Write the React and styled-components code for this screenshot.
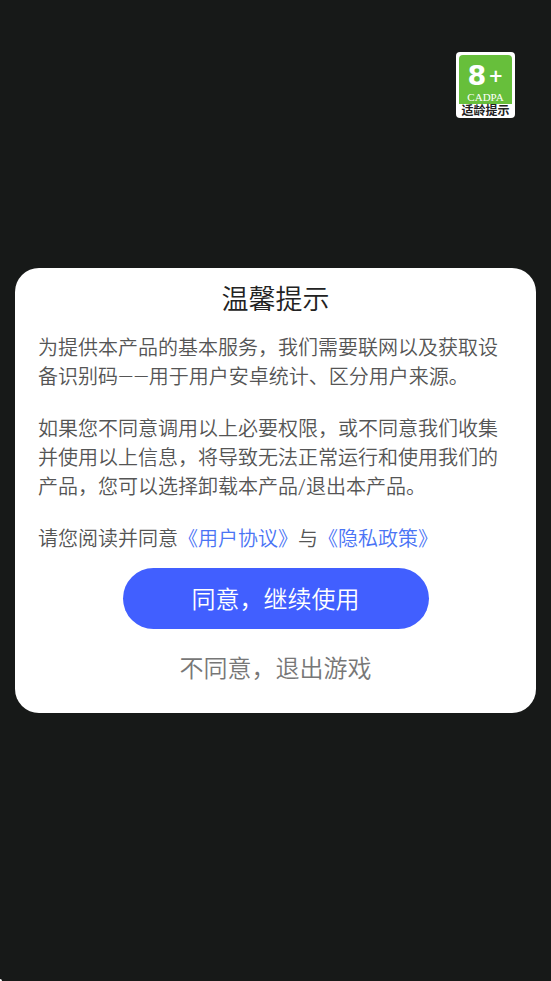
import React from 'react'
import styled, {createGlobalStyle} from 'styled-components'

const GlobalStyle = createGlobalStyle`
  * {
    box-sizing: border-box;
  }
  body {
    margin: 0;
    background: #171918;
    font-family: Roboto, 'Noto Sans CJK SC', sans-serif;
    font-weight: 350;
  }
  button {
    border: none;
    padding: 0;
    font-family: inherit;
    font-weight: inherit;
    cursor: pointer;
  }
`

const App = () => (
  <>
    <GlobalStyle />
    <Page>
      <AgeRating />
      <Dialog role="dialog" aria-labelledby="title">
        <Title id="title">温馨提示</Title>
        <Content>
          <p>为提供本产品的基本服务，我们需要联网以及获取设备识别码——用于用户安卓统计、区分用户来源。</p>
          <p>如果您不同意调用以上必要权限，或不同意我们收集并使用以上信息，将导致无法正常运行和使用我们的产品，您可以选择卸载本产品/退出本产品。</p>
          <p>请您阅读并同意<Link href="#">《用户协议》</Link>与<Link href="#">《隐私政策》</Link></p>
        </Content>
        <Accept type="button">同意，继续使用</Accept>
        <Decline type="button">不同意，退出游戏</Decline>
      </Dialog>
      <Corner />
    </Page>
  </>
)

const AgeRating = () => (
  <Badge type="button">
    <Green>
      <Age>8<Plus>+</Plus></Age>
      <Cadpa>CADPA</Cadpa>
    </Green>
    <Hint>适龄提示</Hint>
  </Badge>
)

const Page = styled.main`
  position: relative;
  display: flex;
  align-items: center;
  justify-content: center;
  min-height: 100vh;
  padding: 0 15px;
`

const Dialog = styled.section`
  display: flex;
  flex-direction: column;
  align-items: center;
  width: 100%;
  max-width: 600px;
  padding: 14px 23px 22px;
  border-radius: 24px;
  background: #fff;
`

const Title = styled.h1`
  margin: 0 0 16px;
  font-size: 27px;
  font-weight: inherit;
  line-height: 36px;
  color: #222;
`

const Content = styled.div`
  align-self: stretch;
  margin-bottom: 14px;
  font-size: 20px;
  line-height: 29px;
  color: #555;

  p {
    margin: 0;
  }
  p + p {
    margin-top: 23px;
  }
`

const Link = styled.a`
  color: #4a74f5;
  text-decoration: none;
`

const Accept = styled.button`
  width: 306px;
  max-width: 100%;
  height: 61px;
  && {
    padding-bottom: 2px;
  }
  border-radius: 31px;
  background: #415fff;
  font-size: 24px;
  color: #fff;
`

const Decline = styled.button`
  margin-top: 18px;
  background: none;
  font-size: 24px;
  line-height: 44px;
  color: #777;
`

const Badge = styled.button`
  position: absolute;
  top: 52px;
  right: 36px;
  display: flex;
  flex-direction: column;
  width: 59px;
  height: 66px;
  && {
    padding: 3px 3px 0;
  }
  border-radius: 4px;
  background: #fff;
`

const Green = styled.span`
  display: flex;
  flex-direction: column;
  align-items: center;
  height: 49px;
  padding-top: 7px;
  border-radius: 4px 4px 0 0;
  background: #67bf3b;
  color: #fff;
`

const Age = styled.span`
  display: flex;
  align-items: center;
  gap: 2px;
  font: bold 27px/28px 'DejaVu Sans', sans-serif;
`

const Plus = styled.span`
  font-size: 18px;
`

const Cadpa = styled.span`
  font: 11px/14px 'Liberation Serif', serif;
`

const Hint = styled.span`
  align-self: center;
  font-size: 12px;
  font-weight: 700;
  line-height: 14px;
  color: #222;
`

// light sliver in the bottom left corner of the screen
const Corner = styled.i`
  position: absolute;
  left: 0;
  bottom: 0;
  border: 1px solid #fff;
  border-top-right-radius: 2px;
`

export default App
